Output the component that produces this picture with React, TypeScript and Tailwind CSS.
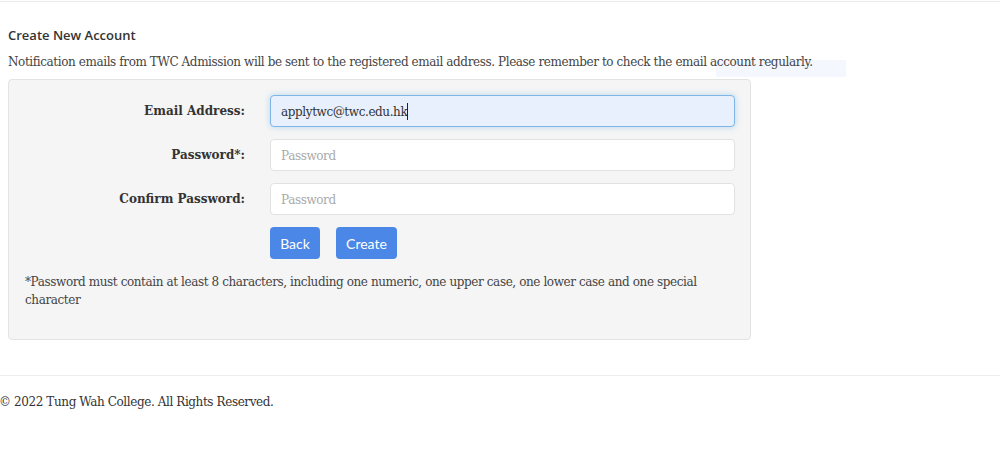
const serif = { fontFamily: '"DejaVu Serif", Georgia, serif', letterSpacing: '-0.4px' }

export default function App() {
  return (
    <div className="relative h-[476px] w-full overflow-hidden bg-white text-[#333] [font-family:'DejaVu_Serif',Georgia,serif]">
      {/* faint autofill hint sitting behind the notice text */}
      <div className="absolute top-[60px] left-[716px] h-[17px] w-[130px] bg-[#f4f8fe]" />

      <div className="relative">
        <div className="mt-px h-px w-full bg-[#ececec]" />

        <div className="px-2 pt-[24px]">
          <h2 className="text-[13px] leading-[18px] font-semibold text-[#333] [font-family:'Open_Sans',Lato,sans-serif]">
            Create New Account
          </h2>
          <p className="mt-[9px] text-[12px] leading-[18px] tracking-[-0.4px] text-[#444]">
            Notification emails from TWC Admission will be sent to the registered email address. Please remember to check the email account regularly.
          </p>

          <div className="mt-[8px] h-[261px] w-[743px] rounded-[4px] border border-[#e3e3e3] bg-[#f5f5f5] pt-[15px]">
            <form className="flex flex-col gap-[12px]">
              <Row label="Email Address:">
                <div className="relative">
                  <input
                    defaultValue="applytwc@twc.edu.hk"
                    className="h-8 w-[465px] rounded-[4px] border border-[#7fb6e6] bg-[#e8f0fe] px-[10px] pt-px text-[12px] text-[#333] shadow-[0_0_6px_rgba(102,175,233,0.45)] outline-none"
                    style={serif}
                  />
                  <span className="absolute top-[8px] left-[137px] h-[17px] w-px bg-[#222]" />
                </div>
              </Row>
              <Row label="Password*:">
                <input
                  type="password"
                  placeholder="Password"
                  className="h-8 w-[465px] rounded-[4px] border border-[#e2e2e2] bg-white px-[10px] pt-px text-[12px] outline-none placeholder:text-[#aaa]"
                  style={serif}
                />
              </Row>
              <Row label="Confirm Password:">
                <input
                  type="password"
                  placeholder="Password"
                  className="h-8 w-[465px] rounded-[4px] border border-[#e2e2e2] bg-white px-[10px] pt-px text-[12px] outline-none placeholder:text-[#aaa]"
                  style={serif}
                />
              </Row>
              <div className="flex gap-4 pl-[261px]">
                <button
                  type="button"
                  className="h-8 w-[50px] rounded-[4px] bg-[#4a87e6] text-[14px] text-white [font-family:Lato,'Open_Sans',sans-serif]"
                >
                  Back
                </button>
                <button
                  type="button"
                  className="h-8 w-[61px] rounded-[4px] bg-[#4a87e6] text-[14px] text-white [font-family:Lato,'Open_Sans',sans-serif]"
                >
                  Create
                </button>
              </div>
            </form>
            <p className="mt-[14px] pr-[50px] pl-4 text-[12px] leading-[18px] tracking-[-0.4px] text-[#444]">
              *Password must contain at least 8 characters, including one numeric, one upper case, one lower case and one special character
            </p>
          </div>
        </div>

        <div className="mt-[35px] h-px w-full bg-[#eeeeee]" />
        <p className="mt-[17px] -ml-px text-[12px] leading-[18px] tracking-[-0.4px] text-[#333]">
          © 2022 Tung Wah College. All Rights Reserved.
        </p>
      </div>
    </div>
  )
}

function Row({ label, children }: { label: string; children: React.ReactNode }) {
  return (
    <div className="flex items-center gap-[25px]">
      <label className="w-[236px] text-right text-[12px] font-bold text-[#333]">{label}</label>
      {children}
    </div>
  )
}
